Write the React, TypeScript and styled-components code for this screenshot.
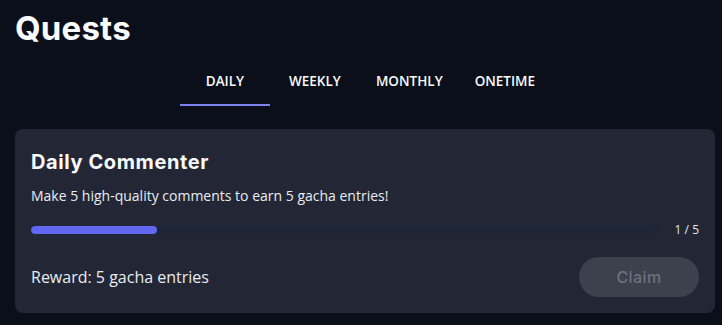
import React, { useState } from "react";
import styled, { createGlobalStyle } from "styled-components";

const Global = createGlobalStyle`
  html, body { margin: 0; padding: 0; background: #0b0f19; }
  body { font-family: "Open Sans", "Noto Sans", sans-serif; color: #f1f5f9; }
  * { box-sizing: border-box; }
`;

const Page = styled.div`
  padding: 6px 8px 0 15px;
  width: 722px;
`;

const Title = styled.h1`
  margin: 0;
  font-family: Inter, "Noto Sans", sans-serif;
  font-weight: 700;
  font-size: 33px;
  line-height: 44px;
  letter-spacing: 0.2px;
  color: #f8fafc;
`;

const Tabs = styled.div`
  display: flex;
  justify-content: center;
  margin-top: 12px;
  padding-left: 2px;
`;

const Tab = styled.button<{ $active?: boolean }>`
  min-width: 90px;
  padding: 10px 16px 14px;
  background: none;
  border: none;
  border-bottom: 2px solid ${(p) => (p.$active ? "#7c83f0" : "transparent")};
  color: #f8fafc;
  font-family: "Open Sans", "Noto Sans", sans-serif;
  font-weight: 600;
  font-size: 13.5px;
  line-height: 18px;
  cursor: pointer;
`;

const Card = styled.section`
  margin-top: 23px;
  width: 700px;
  background: #232735;
  border-radius: 8px;
  padding: 19px 16px 16px;
`;

const CardTitle = styled.h2`
  margin: 0;
  font-family: Inter, "Noto Sans", sans-serif;
  font-weight: 700;
  font-size: 20px;
  line-height: 28px;
  letter-spacing: 0.6px;
  color: #f8fafc;
`;

const Desc = styled.p`
  margin: 10px 0 0;
  font-size: 14px;
  line-height: 20px;
  color: #e8ecf2;
`;

const ProgressRow = styled.div`
  display: flex;
  align-items: center;
  gap: 16px;
  margin-top: 15px;
`;

const Track = styled.div`
  flex: 1;
  height: 8px;
  border-radius: 4px;
  background: #1d2636;
  overflow: hidden;
`;

const Fill = styled.div`
  height: 100%;
  border-radius: 4px;
  background: #6366f1;
`;

const Count = styled.span`
  font-size: 12px;
  color: #e2e8f0;
  white-space: nowrap;
`;

const Footer = styled.div`
  display: flex;
  align-items: center;
  justify-content: space-between;
  margin-top: 19px;
`;

const Reward = styled.span`
  font-size: 16px;
  color: #e8ecf2;
`;

const ClaimButton = styled.button`
  width: 120px;
  height: 40px;
  border: none;
  border-radius: 20px;
  background: #3d404d;
  color: #6d717c;
  font-family: Inter, "Noto Sans", sans-serif;
  font-weight: 500;
  font-size: 16px;
  letter-spacing: 0.4px;
  cursor: not-allowed;
`;

const tabs = ["DAILY", "WEEKLY", "MONTHLY", "ONETIME"];

export default function App() {
  const [active, setActive] = useState("DAILY");
  const progress = 1;
  const total = 5;
  return (
    <Page>
      <Global />
      <Title>Quests</Title>
      <Tabs>
        {tabs.map((t) => (
          <Tab key={t} $active={t === active} onClick={() => setActive(t)}>
            {t}
          </Tab>
        ))}
      </Tabs>
      <Card>
        <CardTitle>Daily Commenter</CardTitle>
        <Desc>Make 5 high-quality comments to earn 5 gacha entries!</Desc>
        <ProgressRow>
          <Track>
            <Fill style={{ width: `${(progress / total) * 100}%` }} />
          </Track>
          <Count>
            {progress} / {total}
          </Count>
        </ProgressRow>
        <Footer>
          <Reward>Reward: 5 gacha entries</Reward>
          <ClaimButton disabled>Claim</ClaimButton>
        </Footer>
      </Card>
    </Page>
  );
}
